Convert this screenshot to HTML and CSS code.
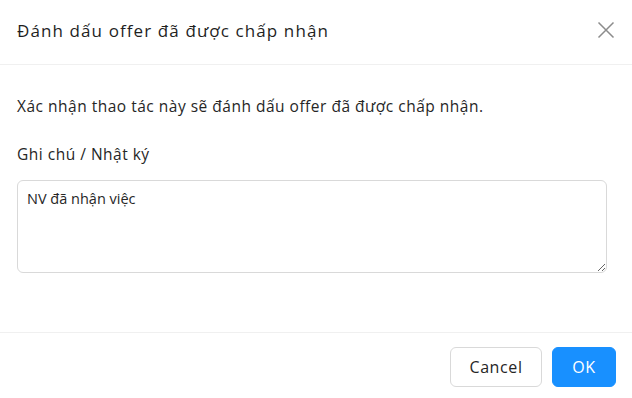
FILE: index.html
```html
<!DOCTYPE html>
<html lang="vi">
<head>
<meta charset="utf-8">
<link rel="stylesheet" href="styles.css">
</head>
<body>
<div class="modal">
  <div class="modal-header">
    <div class="modal-title">Đánh dấu offer đã được chấp nhận</div>
    <button class="close" aria-label="Close">
      <svg width="18" height="18" viewBox="0 0 18 18"><path d="M1.5 1.5 L16.5 16.5 M16.5 1.5 L1.5 16.5" stroke="#8c8c8c" stroke-width="1.5" fill="none"/></svg>
    </button>
  </div>
  <div class="modal-body">
    <p class="desc">Xác nhận thao tác này sẽ đánh dấu offer đã được chấp nhận.</p>
    <label class="label">Ghi chú / Nhật ký</label>
    <textarea class="textarea">NV đã nhận việc</textarea>
  </div>
  <div class="modal-footer">
    <button class="btn btn-default">Cancel</button>
    <button class="btn btn-primary">OK</button>
  </div>
</div>
</body>
</html>
```
FILE: styles.css
```css
* { box-sizing: border-box; }
html, body { margin: 0; padding: 0; background: #fff; }
body { font-family: "Open Sans", "Noto Sans", sans-serif; color: #262626; }
.modal { width: 632px; height: 398px; display: flex; flex-direction: column; }
.modal-header {
  height: 65px; border-bottom: 1px solid #f0f0f0;
  display: flex; align-items: center; justify-content: space-between;
  padding: 0 14px 0 17px;
}
.modal-title { font-size: 17px; font-weight: 500; color: #1f1f1f; padding-bottom: 4px; letter-spacing: 1.1px; }
.close { background: none; border: 0; padding: 0; width: 24px; height: 24px; display: flex; align-items: center; justify-content: center; margin-bottom: 4px; }
.modal-body { flex: 1; padding: 30px 25px 0 17px; display: flex; flex-direction: column; }
.desc { margin: 0 0 26px; font-size: 15.5px; line-height: 22px; letter-spacing: 0.5px; }
.label { font-size: 15.5px; line-height: 22px; margin-bottom: 15px; letter-spacing: 0.5px; }
.textarea {
  width: 590px; height: 93px; border: 1px solid #d9d9d9; border-radius: 6px;
  padding: 7px 9px; font-family: inherit; font-size: 14.5px; line-height: 22px; color: #262626;
  resize: vertical; outline: none;
}
.modal-footer {
  border-top: 1px solid #f0f0f0; height: 66px;
  display: flex; justify-content: flex-end; align-items: flex-start;
  padding: 14px 16px 0 0; gap: 10px;
}
.btn { height: 40px; border-radius: 6px; font-family: inherit; font-size: 16px; padding: 0; cursor: pointer; letter-spacing: 0.6px; }
.btn-default { background: #fff; border: 1px solid #d9d9d9; color: #262626; width: 92px; }
.btn-primary { background: #1890ff; border: 1px solid #1890ff; color: #fff; width: 64px; }
```
